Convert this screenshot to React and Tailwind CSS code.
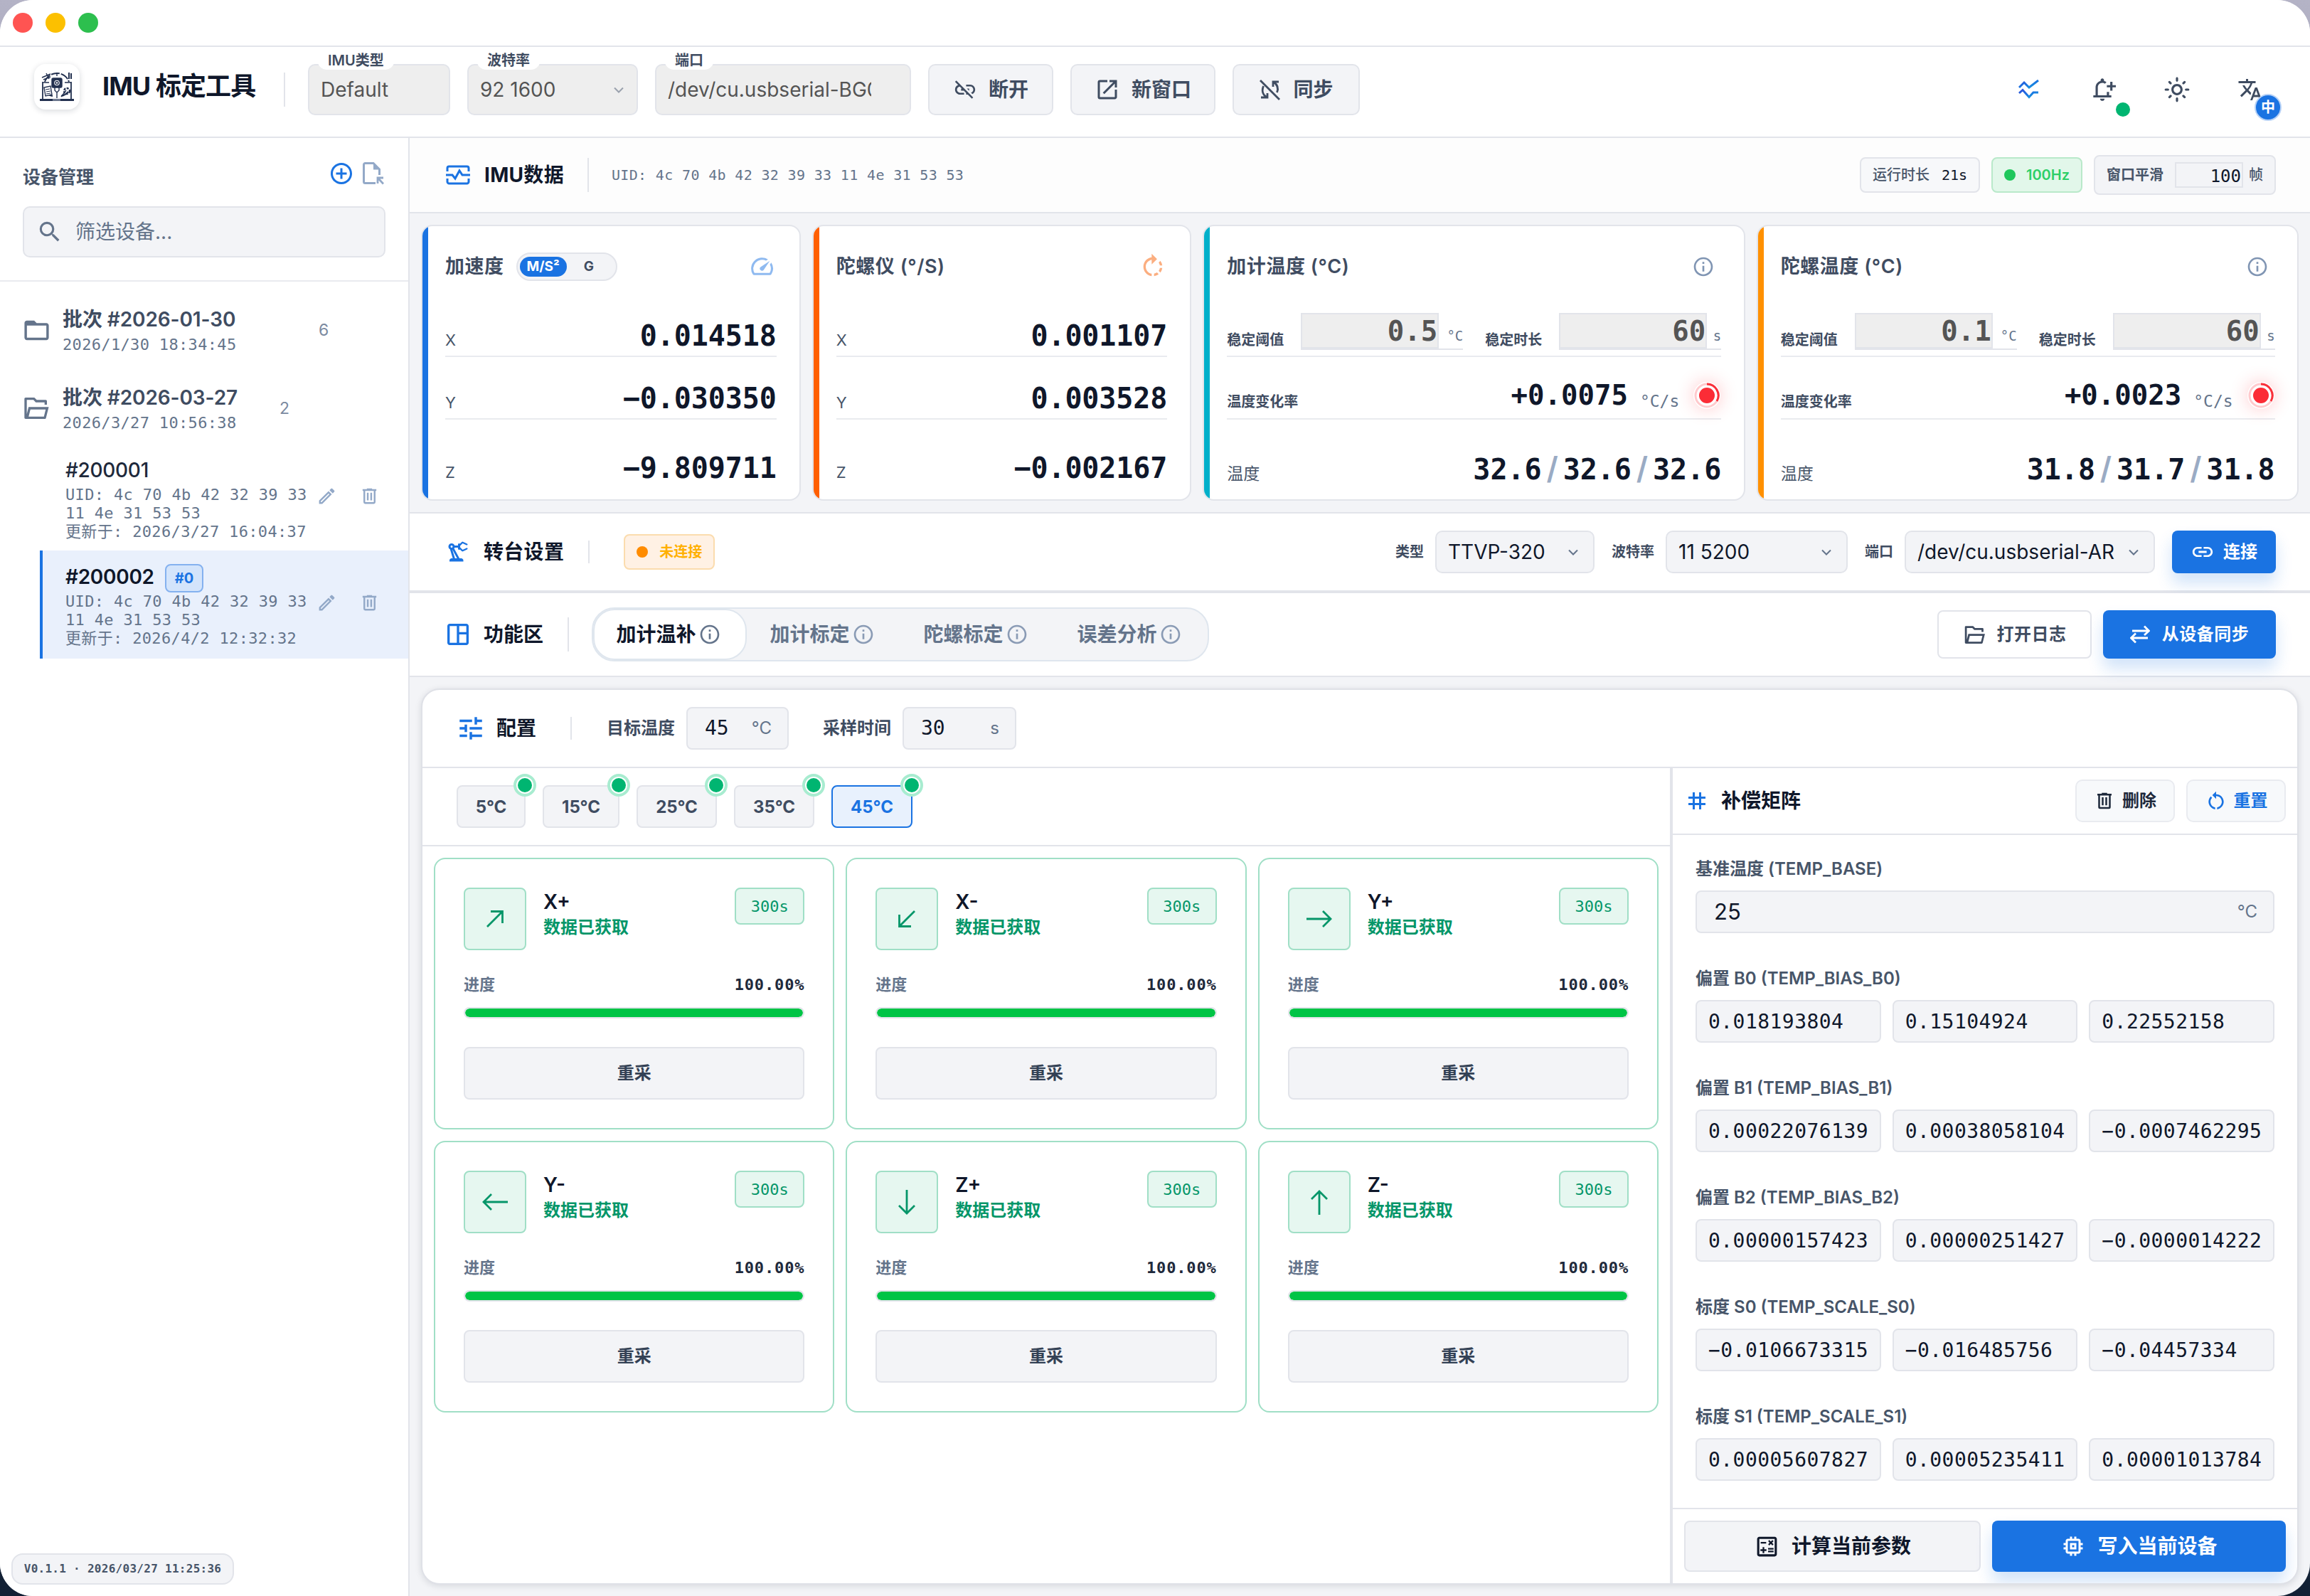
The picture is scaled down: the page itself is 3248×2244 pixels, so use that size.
import React from 'react';
import {
    MdOpenInNew, MdLinkOff, MdLink, MdOutlineNotificationAdd, MdOutlineLightMode, MdTranslate,
    MdAddCircleOutline, MdSearch, MdFolderOpen, MdOutlineEdit, MdOutlineSpeed, MdRotateRight,
    MdInfoOutline, MdOutlinePrecisionManufacturing, MdOutlineSpaceDashboard, MdTune,
    MdTag, MdRestartAlt, MdOutlineCalculate, MdMemory,
} from 'react-icons/md';
import { RiFolderOpenLine } from 'react-icons/ri';

const MONO = "font-['DejaVu_Sans_Mono','Noto_Sans_CJK_SC',monospace]";

const TrashIcon = ({ size, className }) => (
    <svg width={size} height={size} viewBox="0 0 24 24" fill="currentColor" className={className}>
        <path d="M9,3V4H4V6H5V19A2,2 0 0,0 7,21H17A2,2 0 0,0 19,19V6H20V4H15V3H9M7,6H17V19H7V6M9,8V17H11V8H9M13,8V17H15V8H13Z" />
    </svg>
);

const SyncOffIcon = () => (
    <svg width="32" height="32" viewBox="0 0 32 32" fill="none" stroke="currentColor" strokeWidth="2.8">
        <path d="M2 3L29 30" />
        <path d="M20 12V5h8M21 5.5C26 9 28 14 25.5 20" />
        <path d="M12 21v6H3M11 26.500C5 23 4 17 6.500 11" />
    </svg>
);

const SwapIcon = () => (
    <svg width="28" height="26" viewBox="0 0 28 26" fill="none" stroke="currentColor" strokeWidth="2.8">
        <path d="M3 8h23M20 1.500L26.500 8 20 14" />
        <path d="M25 18H2M8 11.500L1.500 18 8 24.500" />
    </svg>
);

const PulseIcon = () => (
    <svg width="34" height="28" viewBox="0 0 34 28" fill="none" stroke="#1a73e2" strokeWidth="3">
        <path d="M2 9V4.500A2.500 2.500 0 0 1 4.500 2h25A2.500 2.500 0 0 1 32 4.500V9M2 19v4.500A2.500 2.500 0 0 0 4.500 26h25a2.500 2.500 0 0 0 2.500-2.500V19" />
        <path d="M0 14h9l4 5 6-11 4 6h11" />
    </svg>
);

const WavesIcon = () => (
    <svg width="30" height="28" viewBox="0 0 30 28" fill="none" strokeWidth="3">
        <defs>
            <linearGradient id="waves" x1="0" y1="0" x2="1" y2="1">
                <stop offset="0" stopColor="#2f4fd8" />
                <stop offset="0.5" stopColor="#1a73e2" />
                <stop offset="1" stopColor="#18a5dc" />
            </linearGradient>
        </defs>
        <g stroke="url(#waves)">
            <path d="M1 11l7-7 7 7L28 1" />
            <path d="M1 19l5-4.500 9 10 6-6.500h7" />
        </g>
    </svg>
);

const FileMoveIcon = () => (
    <svg width="30" height="32" viewBox="0 0 30 32" fill="none" stroke="#93a9c8" strokeWidth="3">
        <path d="M18 29.500H3.500a2 2 0 0 1-2-2v-24a2 2 0 0 1 2-2H15L23.500 10v8" />
        <path d="M15 1l9 9.500h-9z" fill="#93a9c8" stroke="none" />
        <path d="M21 30v-8h8M22 23l7 7.500" strokeWidth="2.800" />
    </svg>
);

const Chevron = ({ className }) => (
    <svg width="14" height="9" viewBox="0 0 14 9" fill="none" strokeWidth="2" stroke="currentColor" className={className}>
        <path d="M1 1.500l6 6 6-6" />
    </svg>
);

const LogoIcon = () => (
    <svg width="48" height="42" viewBox="0 0 48 42" fill="none" stroke="#22304f" strokeWidth="1.400">
        <path d="M4 38V14M44 38V14" strokeWidth="1.800" />
        <path d="M0 39.500h48" strokeWidth="3" />
        <path d="M18 39.500h11" stroke="#8a94a8" strokeWidth="2" />
        <path d="M7 14a18 18 0 0 1 34 0M8 28a18 18 0 0 0 10 6M40 28a18 18 0 0 1-10 6" strokeWidth="2" strokeDasharray="12 2" />
        <rect x="17" y="9" width="14" height="13" rx="2" fill="#22304f" />
        <circle cx="24" cy="15.500" r="4.500" fill="#fff" />
        <circle cx="24" cy="15.500" r="2" />
        <path d="M21 22v4l3 3 3-3v-4M24 29v8M24 1v5M5 15h8M35 15h9" />
        <path d="M6 22l9-2 2 12-9 2z" fill="#fff" />
        <path d="M8 25l6-1M9 28l6-1M9 31l6-1" strokeWidth="1" />
        <circle cx="38" cy="27" r="4" strokeWidth="2.400" strokeDasharray="3 1.500" />
        <path d="M30 35l7-9M3 8l12-5M5 11l10-4M9 2l4 8" />
        <path d="M41 1v9M44 2v8" strokeWidth="2" />
    </svg>
);

const AxisArrow = ({ d }) => (
    <svg width="36" height="36" viewBox="0 0 36 36" fill="none" stroke="#059669" strokeWidth="2.800">
        <path d={d} />
    </svg>
);

const LabeledField = ({ label, value, width, chevron, clip }) => (
    <div className={`relative h-[72px] ${width} rounded-[10px] border-2 border-[#e2e4ea] bg-[#eeeeee] flex items-center justify-between pl-4 pr-[18px]`}>
        <span className="absolute left-[11px] -top-[22px] h-7 rounded-b-[14px] bg-white px-[15px] text-[20px] leading-[31px] font-semibold text-[#3f4c61] whitespace-nowrap">{label}</span>
        <span className={`text-[28px] text-[#545454] whitespace-nowrap overflow-hidden ${clip || ''}`}>{value}</span>
        {chevron && <Chevron className="text-[#9aa1ad]" />}
    </div>
);

const HeaderButton = ({ icon, label, width }) => (
    <button className={`h-[72px] ${width} rounded-[10px] border-2 border-[#e2e4ea] bg-[#f3f4f7] flex items-center justify-center gap-4 text-[28px] font-semibold text-[#3f4c61]`}>
        {icon}
        {label}
    </button>
);

const Header = () => (
    <header className="h-[128px] shrink-0 border-b-2 border-[#e2e4ea] bg-white flex items-start pt-6 pl-12">
        <div className="size-16 rounded-2xl bg-white shadow-[0_2px_8px_rgba(15,23,42,0.16)] flex items-center justify-center">
            <LogoIcon />
        </div>
        <h1 className="ml-8 mt-[7px] w-[222px] text-[36px] leading-[48px] font-bold tracking-[-0.9px] text-[#0f172a] whitespace-nowrap">IMU 标定工具</h1>
        <div className="ml-[33px] mt-3 w-0.5 h-12 bg-[#e2e4ea]" />
        <div className="ml-8 flex gap-6">
            <LabeledField label="IMU类型" value="Default" width="w-[200px]" />
            <LabeledField label="波特率" value="92 1600" width="w-[240px]" chevron />
            <LabeledField label="端口" value="/dev/cu.usbserial-BG0" width="w-[360px]" clip="w-[286px]" />
            <HeaderButton icon={<MdLinkOff size={34} />} label="断开" width="w-[176px]" />
            <HeaderButton icon={<MdOpenInNew size={36} />} label="新窗口" width="w-[204px]" />
            <HeaderButton icon={<SyncOffIcon />} label="同步" width="w-[179px]" />
        </div>
        <div className="ml-auto mr-[66px] mt-4 h-10 flex items-center text-[#3f4c61]">
            <WavesIcon />
            <div className="relative ml-[69px] w-10">
                <MdOutlineNotificationAdd size={38} />
                <span className="absolute left-[38px] top-[37px] size-5 rounded-full bg-[#00b571]" />
            </div>
            <MdOutlineLightMode size={38} className="ml-[65px]" />
            <div className="relative ml-[66px] w-9">
                <MdTranslate size={36} />
                <span className="absolute left-[24px] top-[24px] size-[38px] rounded-full border-2 border-[#b7d2f7] bg-[#1a73e2] text-white text-[20px] leading-[34px] font-bold text-center">中</span>
            </div>
        </div>
    </header>
);

const Batch = ({ icon, title, time, count, countPos }) => (
    <div className="h-[110px] flex items-center pl-[31px]">
        <div className="w-[57px]">{icon}</div>
        <div className="w-[260px] pt-[3px]">
            <div className="text-[28px] leading-[38px] tracking-[-0.1px] font-semibold text-[#3f4c61] whitespace-nowrap">{title}</div>
            <div className={`${MONO} text-[22px] leading-[34px] tracking-[0.34px] text-[#64748b] whitespace-nowrap`}>{time}</div>
        </div>
        <span className={`${countPos} text-[23px] text-[#7b8aa0]`}>{count}</span>
    </div>
);

const Device = ({ name, badge, time, active }) => (
    <div className={`ml-14 h-[152px] border-l-4 pl-8 ${active ? 'border-[#1a73e2] bg-[#e9f0fc] pt-[17px]' : 'border-transparent pt-[19px]'}`}>
        <div className="h-10 flex items-center gap-[15px]">
            <span className={`text-[28px] tracking-[-0.3px] ${active ? 'font-semibold text-[#0f172a]' : 'font-medium text-[#1e293b]'}`}>{name}</span>
            {badge && <span className="mt-1 h-10 px-3 rounded-lg border-2 border-[#84b1ef] bg-[#d3e4fb] text-[20px] leading-9 font-bold text-[#1a73e2]">{badge}</span>}
        </div>
        <div className="flex">
            <div className={`${MONO} mt-[2px] w-[353px] text-[22px] leading-[25.800px] tracking-[0.34px] text-[#64748b] whitespace-nowrap`}>
                UID: 4c 70 4b 42 32 39 33<br />11 4e 31 53 53<br />更新于: {time}
            </div>
            <MdOutlineEdit size={29} className="mt-[2px] text-[#93a9c8]" />
            <TrashIcon size={29} className="ml-[31px] mt-[2px] text-[#93a9c8]" />
        </div>
    </div>
);

const Sidebar = () => (
    <aside className="w-[576px] shrink-0 border-r-2 border-[#e2e4ea] bg-white flex flex-col">
        <div className="h-[202px] shrink-0 border-b-2 border-[#e9ebef] px-8">
            <div className="h-24 pt-4 flex items-center">
                <h2 className="text-[25px] font-bold text-[#475569]">设备管理</h2>
                <MdAddCircleOutline size={36} className="ml-auto -mt-3 text-[#1a73e2]" />
                <div className="ml-3 mr-[2px] -mt-3"><FileMoveIcon /></div>
            </div>
            <div className="h-[72px] w-[510px] rounded-[10px] border-2 border-[#e2e4ea] bg-[#f3f4f7] flex items-center pl-[17px] text-[28px] text-[#64748b]">
                <MdSearch size={38} className="mr-[17px]" />
                筛选设备...
            </div>
        </div>
        <div className="pt-[13px]">
            <Batch icon={<MdFolderOpen size={41} className="text-[#64748b]" />} title="批次 #2026-01-30" time="2026/1/30 18:34:45" count="6" countPos="ml-[100px]" />
            <Batch icon={<RiFolderOpenLine size={40} className="text-[#64748b]" />} title="批次 #2026-03-27" time="2026/3/27 10:56:38" count="2" countPos="ml-[45px]" />
        </div>
        <div className="-mt-[7px]">
            <Device name="#200001" time="2026/3/27 16:04:37" />
            <Device name="#200002" badge="#0" time="2026/4/2 12:32:32" active />
        </div>
        <div className={`${MONO} mt-auto ml-4 mb-4 h-11 w-[313px] rounded-[16px] border-2 border-[#e2e4ea] bg-[#f3f4f7] flex items-center justify-center text-[16px] font-bold tracking-[0.28px] text-[#475569] whitespace-nowrap`}>
            V0.1.1 · 2026/03/27 11:25:36
        </div>
    </aside>
);

const ImuBar = () => (
    <div className="h-[106px] shrink-0 border-b-2 border-[#e2e4ea] bg-[#fdfdfd] flex items-center pl-[51px] pr-12">
        <PulseIcon />
        <h2 className="ml-5 text-[28px] tracking-[0.3px] font-bold text-[#0f172a]">IMU数据</h2>
        <div className="ml-[33px] w-0.5 h-12 bg-[#e2e4ea]" />
        <span className={`${MONO} ml-8 text-[20px] tracking-[0.34px] text-[#64748b]`}>UID: 4c 70 4b 42 32 39 33 11 4e 31 53 53</span>
        <div className="ml-auto flex items-center gap-4 text-[20px] font-medium text-[#475569]">
            <div className="h-[50px] w-[169px] rounded-lg border-2 border-[#e2e4ea] bg-[#f7f8fa] flex items-center justify-center gap-[17px]">
                运行时长
                <span className={`${MONO} text-[#0f172a]`}>21s</span>
            </div>
            <div className="h-[50px] w-[128px] rounded-lg border-2 border-[#b9e9ca] bg-[#e2f7ea] flex items-center justify-center gap-[15px] font-semibold text-[#2bcf68]">
                <span className="size-4 rounded-full bg-[#1ec75b]" />
                100Hz
            </div>
            <div className="h-14 w-[256px] rounded-lg border-2 border-[#e2e4ea] bg-[#f3f4f7] flex items-center pl-4">
                <span className="font-semibold">窗口平滑</span>
                <span className={`${MONO} ml-4 w-24 h-9 border-2 border-[#e2e4ea] text-right text-[24px] leading-9 pr-px text-[#0f172a]`}>100</span>
                <span className="ml-2">帧</span>
            </div>
        </div>
    </div>
);

const SensorCard = ({ accent, title, extra, icon, children }) => (
    <div className="h-[388px] rounded-2xl border-2 border-[#e2e4ea] bg-white overflow-hidden flex">
        <div className={`w-2 shrink-0 ${accent}`} />
        <div className="flex-1 pl-6 pr-8">
            <div className="h-[96px] pt-[18px] flex items-center">
                <h3 className="text-[27px] tracking-[0.55px] font-semibold text-[#3f4c61] whitespace-nowrap">{title}</h3>
                {extra}
                <div className="ml-auto">{icon}</div>
            </div>
            {children}
        </div>
    </div>
);

const ValueRow = ({ label, value, last }) => (
    <div className={`flex items-baseline justify-between ${last ? 'pt-[44px]' : 'border-b-2 border-[#e9ebef] h-[88px] pt-[34px]'}`}>
        <span className="text-[22px] text-[#475569]">{label}</span>
        <span className={`${MONO} text-[40px] leading-[48px] tracking-[-0.1px] font-bold text-[#0f172a]`}>{value}</span>
    </div>
);

const AxisRows = ({ values }) => (
    <>
        <ValueRow label="X" value={values[0]} />
        <ValueRow label="Y" value={values[1]} />
        <ValueRow label="Z" value={values[2]} last />
    </>
);

const UnitInput = ({ value, unit, width, total }) => (
    <div className={`${total} h-[52px] border-b-2 border-[#e2e4ea] flex items-end justify-between`}>
        <span className={`${MONO} ${width} h-[50px] border-2 border-[#e2e4ea] bg-[#eeeeee] text-right text-[39px] leading-[48px] font-bold text-[#545454]`}>{value}</span>
        <span className={`${MONO} text-[19px] leading-[36px] text-[#64748b]`}>{unit}</span>
    </div>
);

const Indicator = () => (
    <svg width="38" height="38" viewBox="0 0 38 38" fill="none" className="rounded-full shadow-[0_0_24px_rgba(255,40,50,0.25)]">
        <circle cx="19" cy="19" r="16" stroke="#ffc9cc" strokeWidth="3" />
        <path d="M19 3A16 16 0 0 1 33 27" stroke="#f9303a" strokeWidth="3" />
        <circle cx="19" cy="19" r="11" fill="#fb2c36" />
    </svg>
);

const TempRows = ({ threshold, rate, temps }) => (
    <>
        <div className="h-[88px] border-b-2 border-[#e9ebef] pt-[26px] flex">
            <span className="w-[104px] pt-[23px] text-[20px] leading-[30px] font-semibold text-[#3f4c61] whitespace-nowrap">稳定阈值</span>
            <UnitInput value={threshold} unit="°C" width="w-[194px]" total="w-[228px]" />
            <span className="w-[104px] ml-[31px] pt-[23px] text-[20px] leading-[30px] font-semibold text-[#3f4c61] whitespace-nowrap">稳定时长</span>
            <UnitInput value="60" unit="s" width="w-[208px]" total="w-[228px]" />
        </div>
        <div className="relative h-[88px] border-b-2 border-[#e9ebef] pt-[33px] flex items-baseline">
            <span className="text-[20px] font-semibold text-[#3f4c61]">温度变化率</span>
            <span className={`${MONO} ml-auto text-[39px] leading-[48px] font-bold text-[#0f172a] -translate-y-[3px]`}>{rate}</span>
            <span className={`${MONO} ml-[17px] mr-[59px] text-[23px] text-[#64748b]`}>°C/s</span>
            <div className="absolute right-[1px] top-[35px]"><Indicator /></div>
        </div>
        <div className="pt-[44px] flex items-baseline">
            <span className="mr-auto text-[23px] leading-[30px] text-[#475569]">温度</span>
            {temps.map((t, i) => (
                <React.Fragment key={i}>
                    {i > 0 && <span className="w-[30px] text-center text-[43px] leading-[48px] font-semibold text-[#9aabc4]">/</span>}
                    <span className={`${MONO} text-[40px] leading-[48px] font-bold text-[#0f172a]`}>{t}</span>
                </React.Fragment>
            ))}
        </div>
    </>
);

const infoIcon = <MdInfoOutline size={32} className="mr-[9px] text-[#8095b3]" />;

const SensorCards = () => (
    <div className="shrink-0 grid grid-cols-[0.7fr_0.7fr_1fr_1fr] gap-4 p-4">
        <SensorCard
            accent="bg-[#1a73e2]"
            title="加速度"
            extra={
                <div className="ml-[17px] h-10 w-[142px] rounded-full border-2 border-[#e2e4ea] bg-[#f3f4f7] flex items-center pl-[3px] text-[19px] font-bold text-[#3f4c61]">
                    <span className="h-7 w-[66px] rounded-full bg-[#1a73e2] text-white leading-7 text-center">M/S²</span>
                    <span className="ml-[24px]">G</span>
                </div>
            }
            icon={<MdOutlineSpeed size={37} className="mr-0.5 -mt-0.5 text-[#8fbaf0]" />}
        >
            <AxisRows values={['0.014518', '−0.030350', '−9.809711']} />
        </SensorCard>
        <SensorCard accent="bg-[#ff5f00]" title="陀螺仪 (°/S)" icon={<MdRotateRight size={40} className="text-[#fbae80]" />}>
            <AxisRows values={['0.001107', '0.003528', '−0.002167']} />
        </SensorCard>
        <SensorCard accent="bg-[#00b0ca]" title="加计温度 (°C)" icon={infoIcon}>
            <TempRows threshold="0.5" rate="+0.0075" temps={['32.6', '32.6', '32.6']} />
        </SensorCard>
        <SensorCard accent="bg-[#ff9000]" title="陀螺温度 (°C)" icon={infoIcon}>
            <TempRows threshold="0.1" rate="+0.0023" temps={['31.8', '31.7', '31.8']} />
        </SensorCard>
    </div>
);

const Select = ({ label, value, width, space }) => (
    <>
        <span className={`${space} mr-4 text-[20px] font-semibold text-[#3f4c61]`}>{label}</span>
        <div className={`h-[60px] ${width} rounded-[10px] border-2 border-[#e2e4ea] bg-[#f3f4f7] flex items-center justify-between pl-4 pr-[21px] text-[28px] text-[#0f172a] whitespace-nowrap`}>
            {value}
            <Chevron className="text-[#64748b]" />
        </div>
    </>
);

const TurntableBar = () => (
    <div className="h-[114px] shrink-0 border-t-2 border-b-4 border-[#e2e4ea] bg-white flex items-center pl-[50px] pr-12">
        <MdOutlinePrecisionManufacturing size={36} className="text-[#1a73e2]" />
        <h2 className="ml-[18px] text-[28px] tracking-[0.3px] font-bold text-[#0f172a]">转台设置</h2>
        <div className="ml-[34px] w-0.5 h-8 bg-[#e2e4ea]" />
        <div className="ml-12 h-[50px] w-[128px] rounded-lg border-2 border-[#fbdcae] bg-[#fff1e4] flex items-center justify-center gap-4 text-[20px] font-semibold text-[#ffb000]">
            <span className="size-4 rounded-full bg-[#ff8c00]" />
            未连接
        </div>
        <Select label="类型" value="TTVP-320" width="w-[224px]" space="ml-auto" />
        <Select label="波特率" value="11 5200" width="w-[256px]" space="ml-6" />
        <Select label="端口" value="/dev/cu.usbserial-AR" width="w-[352px]" space="ml-6" />
        <button className="ml-6 h-[60px] w-[146px] rounded-lg bg-[#1a73e2] shadow-[0_14px_22px_rgba(26,115,226,0.2)] flex items-center justify-center gap-3 text-[24px] font-bold text-white">
            <MdLink size={34} />
            连接
        </button>
    </div>
);

const tabs = ['加计温补', '加计标定', '陀螺标定', '误差分析'];

const TabsBar = () => (
    <div className="h-[118px] shrink-0 border-b-2 border-[#e2e4ea] bg-white flex items-center pl-[48px] pr-12">
        <MdOutlineSpaceDashboard size={40} className="text-[#1a73e2]" />
        <h2 className="ml-4 text-[28px] font-bold text-[#0f172a]">功能区</h2>
        <div className="ml-[34px] w-0.5 h-12 bg-[#e2e4ea]" />
        <div className="ml-8 h-[76px] w-[868px] rounded-[32px] border-2 border-[#dfe6ee] bg-[#f3f4f7] flex items-center">
            {tabs.map((tab, i) => (
                <div
                    key={tab}
                    className={`h-[72px] w-[216px] flex items-center justify-center gap-[3px] pr-1 text-[28px] font-semibold whitespace-nowrap ${i === 0
                            ? 'rounded-[30px] border-2 border-[#dfe6ee] bg-white text-[#0f172a]'
                            : 'text-[#64748b]'
                        }`}
                >
                    {tab}
                    <MdInfoOutline size={32} className={i === 0 ? 'text-[#64748b]' : 'text-[#8a9bb5]'} />
                </div>
            ))}
        </div>
        <button className="ml-auto h-[68px] w-[217px] rounded-lg border-2 border-[#e2e4ea] bg-white flex items-center justify-center gap-[15px] text-[24px] tracking-[0.5px] font-semibold text-[#3f4c61]">
            <RiFolderOpenLine size={33} />
            打开日志
        </button>
        <button className="ml-4 h-[68px] w-[243px] rounded-lg bg-[#1a73e2] shadow-[0_14px_22px_rgba(26,115,226,0.2)] flex items-center justify-center gap-[17px] text-[24px] tracking-[0.5px] font-bold text-white">
            <SwapIcon />
            从设备同步
        </button>
    </div>
);

const ConfigBar = () => (
    <div className="h-[110px] shrink-0 border-b-2 border-[#e2e4ea] flex items-center pl-[47px]">
        <MdTune size={42} className="text-[#1a73e2]" />
        <h3 className="ml-[15px] text-[28px] font-bold text-[#0f172a]">配置</h3>
        <div className="ml-12 w-0.5 h-8 bg-[#e2e4ea]" />
        <span className="ml-[49px] w-[112px] text-[24px] font-semibold text-[#3f4c61]">目标温度</span>
        <div className="h-[60px] w-[144px] rounded-lg border-2 border-[#e2e4ea] bg-[#f3f4f7] flex items-center justify-between pl-6 pr-[22px]">
            <span className={`${MONO} text-[28px] text-[#0f172a]`}>45</span>
            <span className="text-[24px] text-[#64748b]">°C</span>
        </div>
        <span className="ml-12 w-[112px] text-[24px] font-semibold text-[#3f4c61]">采样时间</span>
        <div className="h-[60px] w-[160px] rounded-lg border-2 border-[#e2e4ea] bg-[#f3f4f7] flex items-center justify-between pl-6 pr-[22px]">
            <span className={`${MONO} text-[28px] text-[#0f172a]`}>30</span>
            <span className="text-[24px] text-[#64748b]">s</span>
        </div>
    </div>
);

const temps = [
    { label: '5°C', width: 'w-[97px]' },
    { label: '15°C', width: 'w-[108px]' },
    { label: '25°C', width: 'w-[113px]' },
    { label: '35°C', width: 'w-[113px]' },
    { label: '45°C', width: 'w-[114px]', active: true },
];

const axes = [
    { name: 'X+', d: 'M7 29L28 8M12 7.500h16.500V24' },
    { name: 'X-', d: 'M29 7L8 28M7.500 12v16.500H24' },
    { name: 'Y+', d: 'M0 18h34M23 7l11 11-11 11' },
    { name: 'Y-', d: 'M36 18H2M13 7L2 18l11 11' },
    { name: 'Z+', d: 'M18 1v33M7 23l11 11 11-11' },
    { name: 'Z-', d: 'M18 36V3M7 14L18 3l11 11' },
];

const AxisCard = ({ name, d }) => (
    <div className="h-[382px] rounded-2xl border-2 border-[#a0dfc6] bg-white px-10 pt-10">
        <div className="flex">
            <div className="size-[88px] rounded-lg border-2 border-[#a0dfc6] bg-[#e6f7f0] flex items-center justify-center">
                <AxisArrow d={d} />
            </div>
            <div className="ml-6 pt-0.5">
                <div className="text-[28px] leading-9 font-semibold text-[#0f172a]">{name}</div>
                <div className="text-[24px] leading-9 font-bold text-[#059669]">数据已获取</div>
            </div>
            <div className={`${MONO} ml-auto h-[52px] w-[98px] rounded-lg border-2 border-[#a0dfc6] bg-[#e6f7f0] text-center text-[22px] leading-[49px] text-[#059669]`}>300s</div>
        </div>
        <div className="mt-[32px] h-8 flex items-center justify-between">
            <span className="text-[22px] font-semibold text-[#64748b]">进度</span>
            <span className={`${MONO} text-[22px] tracking-[0.85px] font-bold text-[#1e293b]`}>100.00%</span>
        </div>
        <div className="mt-[16px] h-4 rounded-full border-2 border-[#e2e4ea] overflow-hidden">
            <div className="h-full w-full rounded-full bg-[#00c446]" />
        </div>
        <button className="mt-10 h-[74px] w-full rounded-lg border-2 border-[#e2e4ea] bg-[#f3f4f7] text-[24px] font-bold text-[#334155]">重采</button>
    </div>
);

const matrix = [
    { label: '偏置 B0 (TEMP_BIAS_B0)', values: ['0.018193804', '0.15104924', '0.22552158'] },
    { label: '偏置 B1 (TEMP_BIAS_B1)', values: ['0.00022076139', '0.00038058104', '−0.0007462295'] },
    { label: '偏置 B2 (TEMP_BIAS_B2)', values: ['0.00000157423', '0.00000251427', '−0.0000014222'] },
    { label: '标度 S0 (TEMP_SCALE_S0)', values: ['−0.0106673315', '−0.016485756', '−0.04457334'] },
    { label: '标度 S1 (TEMP_SCALE_S1)', values: ['0.00005607827', '0.00005235411', '0.00001013784'] },
];

const MatrixPanel = () => (
    <div className="w-[882px] shrink-0 border-l-4 border-[#e2e4ea] flex flex-col min-h-0">
        <div className="h-[94px] shrink-0 border-b-2 border-[#e2e4ea] flex items-center pl-[16px] pr-4">
            <MdTag size={36} className="text-[#1a73e2]" />
            <h3 className="ml-4 text-[28px] font-bold text-[#0f172a]">补偿矩阵</h3>
            <button className="ml-auto h-[60px] w-[140px] rounded-[10px] border-2 border-[#e9ebf0] bg-[#f7f9fb] flex items-center justify-center gap-[10px] text-[24px] font-semibold text-[#1e293b]">
                <TrashIcon size={30} />
                删除
            </button>
            <button className="ml-4 h-[60px] w-[140px] rounded-[10px] border-2 border-[#e9ebf0] bg-[#f7f9fb] flex items-center justify-center gap-[9px] text-[24px] font-bold text-[#1a73e2]">
                <MdRestartAlt size={32} />
                重置
            </button>
        </div>
        <div className="flex-1 min-h-0 overflow-hidden pt-[31px] px-8">
            <div className="h-[154px]">
                <div className="h-8 mb-[15px] text-[24px] leading-[34px] font-semibold text-[#475569]">基准温度 (TEMP_BASE)</div>
                <div className="h-[60px] rounded-lg border-2 border-[#e2e4ea] bg-[#f3f4f7] flex items-center justify-between pl-6 pr-[22px]">
                    <span className="pt-px text-[31px] text-[#0f172a]">25</span>
                    <span className="text-[24px] text-[#64748b]">°C</span>
                </div>
            </div>
            {matrix.map((row) => (
                <div key={row.label} className="h-[154px]">
                    <div className="h-8 mb-[15px] text-[24px] leading-[34px] font-semibold text-[#475569]">{row.label}</div>
                    <div className="grid grid-cols-3 gap-4">
                        {row.values.map((v) => (
                            <div key={v} className={`${MONO} h-[60px] rounded-lg border-2 border-[#e2e4ea] bg-[#f3f4f7] pl-4 text-[28px] leading-[57px] tracking-[0.45px] text-[#0f172a] whitespace-nowrap`}>{v}</div>
                        ))}
                    </div>
                </div>
            ))}
        </div>
        <div className="h-[106px] shrink-0 border-t-2 border-[#e2e4ea] flex gap-4 p-4">
            <button className="h-[72px] w-[417px] rounded-lg border-2 border-[#e2e4ea] bg-[#f3f4f7] flex items-center justify-center gap-4 text-[28px] font-semibold text-[#0f172a]">
                <MdOutlineCalculate size={37} />
                计算当前参数
            </button>
            <button className="h-[72px] flex-1 rounded-lg bg-[#1a73e2] shadow-[0_14px_22px_rgba(26,115,226,0.2)] flex items-center justify-center gap-4 text-[28px] font-bold text-white">
                <MdMemory size={36} />
                写入当前设备
            </button>
        </div>
    </div>
);

const Workspace = () => (
    <div className="m-4 flex-1 min-h-0 rounded-[26px] border-2 border-[#dfe1e7] bg-white shadow-[0_2px_10px_rgba(15,23,42,0.12)] overflow-hidden flex flex-col">
        <ConfigBar />
        <div className="flex-1 min-h-0 flex">
            <div className="flex-1">
                <div className="h-[110px] border-b-2 border-[#e2e4ea] pl-12 pt-6 flex gap-6">
                    {temps.map((t) => (
                        <div
                            key={t.label}
                            className={`relative h-[60px] ${t.width} rounded-lg border-2 text-center text-[24px] leading-[57px] font-bold ${t.active ? 'border-[#1a73e2] bg-[#e8f1fd] text-[#1a73e2]' : 'border-[#e2e4ea] bg-[#f3f4f7] text-[#3f4c61]'}`}
                        >
                            {t.label}
                            <span className="absolute -right-[17px] -top-[18px] size-8 rounded-full border-4 border-[#a8ecd0] bg-white flex items-center justify-center">
                                <span className="size-5 rounded-full bg-[#00b571]" />
                            </span>
                        </div>
                    ))}
                </div>
                <div className="grid grid-cols-3 gap-4 p-4">
                    {axes.map((a) => (
                        <AxisCard key={a.name} name={a.name} d={a.d} />
                    ))}
                </div>
            </div>
            <MatrixPanel />
        </div>
    </div>
);

const App = () => (
    <div className="w-[3248px] h-[2244px] overflow-hidden bg-linear-to-b from-[#b4b3c6] to-[#122034] font-['Inter','Noto_Sans_CJK_SC',sans-serif]">
        <div className="w-full h-full rounded-[46px] overflow-hidden bg-[#f3f4f7] flex flex-col">
            <div className="h-[66px] shrink-0 border-b-2 border-[#e2e4ea] bg-white flex items-center gap-[18px] pl-[18px]">
                <span className="size-7 rounded-full bg-[#ff5452]" />
                <span className="size-7 rounded-full bg-[#fcc000]" />
                <span className="size-7 rounded-full bg-[#2dbf4e]" />
            </div>
            <Header />
            <div className="flex-1 min-h-0 flex">
                <Sidebar />
                <main className="flex-1 min-w-0 flex flex-col">
                    <ImuBar />
                    <SensorCards />
                    <TurntableBar />
                    <TabsBar />
                    <Workspace />
                </main>
            </div>
        </div>
    </div>
);

export default App;
